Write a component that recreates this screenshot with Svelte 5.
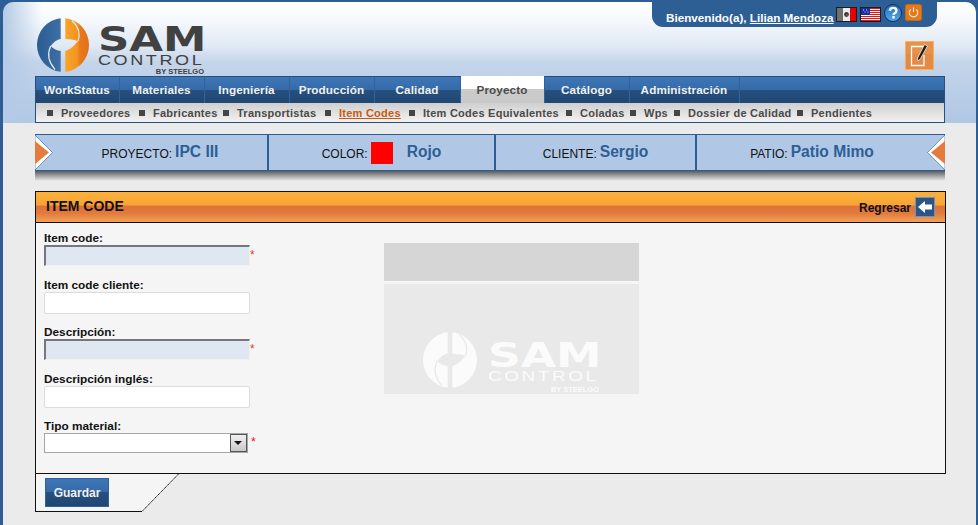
<script>
  const tabs = ['WorkStatus', 'Materiales', 'Ingeniería', 'Producción', 'Calidad', 'Proyecto', 'Catálogo', 'Administración']
  const subs = [
    { name: 'Proveedores', width: 92 },
    { name: 'Fabricantes', width: 84 },
    { name: 'Transportistas', width: 102 },
    { name: 'Item Codes', width: 84 },
    { name: 'Item Codes Equivalentes', width: 157 },
    { name: 'Coladas', width: 64 },
    { name: 'Wps', width: 44 },
    { name: 'Dossier de Calidad', width: 123 },
    { name: 'Pendientes', width: 80 }
  ]
  const info = [
    { label: 'PROYECTO:', value: 'IPC III', width: 234, pad: 18 },
    { label: 'COLOR:', value: 'Rojo', width: 227, pad: 0, swatch: true },
    { label: 'CLIENTE:', value: 'Sergio', width: 201, pad: 0 },
    { label: 'PATIO:', value: 'Patio Mimo', width: 248, pad: -18 }
  ]
  const fields = [
    { label: 'Item code:', required: true, locked: true },
    { label: 'Item code cliente:' },
    { label: 'Descripción:', required: true, locked: true },
    { label: 'Descripción inglés:' }
  ]
</script>

{#snippet mark(a, b, line)}
  <svg class="mark" viewBox="0 0 54 54" aria-hidden="true">
    <defs>
      <linearGradient id="blue-half" x1="0" x2="1" y1="0" y2="0">
        <stop offset="0" stop-color="#2a5c93" />
        <stop offset="1" stop-color="#3f6fa3" />
      </linearGradient>
      <linearGradient id="orange-half" x1="0" x2="1" y1="0" y2="0">
        <stop offset="0" stop-color="#f9a429" />
        <stop offset=".5" stop-color="#f39420" />
        <stop offset=".62" stop-color="#e9791c" />
        <stop offset="1" stop-color="#e2701a" />
      </linearGradient>
    </defs>
    <path d="M24.700 .2A27 27 0 0 0 24.700 53.800V33Q19 32.500 14.700 28Q19 22 24.700 21Z" fill={a} />
    <path d="M29.300 .2A27 27 0 0 1 29.300 53.800V33Q36 31 42 23Q36 21 29.300 21Z" fill={b} />
    <path d="M14.700 28Q9 40 19 51.500" fill="none" stroke={line} stroke-width="1.200" />
    <path d="M36 2.500Q46 12 42 23" fill="none" stroke={line} stroke-width="1.200" />
  </svg>
{/snippet}

<div class="page">
  <header class="top">
    <div class="brand-row">
      <div class="brand">
        {@render mark('url(#blue-half)', 'url(#orange-half)', '#dfe8f3')}
        <div class="word">
          <span class="sam">SAM</span>
          <span class="control">CONTROL</span>
          <span class="by">BY STEELGO</span>
        </div>
      </div>
      <div class="side">
        <div class="user">
          <span class="hello">Bienvenido(a), <a href="#u">Lilian Mendoza</a></span>
          <svg class="flag" viewBox="0 0 21 15" aria-hidden="true">
            <rect width="21" height="15" fill="#1c1c1c" />
            <rect x="1" y="1" width="6" height="13" fill="#6f6f6f" />
            <rect x="7" y="1" width="7" height="13" fill="#ececec" />
            <rect x="14" y="1" width="6" height="13" fill="#e80000" />
            <circle cx="10.500" cy="7.500" r="2.400" fill="#3a3a3a" />
            <circle cx="11" cy="8" r="1" fill="#8a5a3a" />
          </svg>
          <svg class="flag" viewBox="0 0 21 15" aria-hidden="true">
            <rect width="21" height="15" fill="#1c1c1c" />
            <rect x="1" y="1" width="19" height="13" fill="#f7f7f7" />
            <path d="M1 1.500h19M1 3.500h19M1 5.500h19M1 7.500h19M1 9.500h19M1 11.500h19M1 13.500h19" stroke="#e41414" stroke-width="1" />
            <rect x="1" y="1" width="9" height="7" fill="#1b2f9e" />
            <path d="M3 3h1M6 3h1M4.500 5h1M7.500 5h1" stroke="#cfd6f5" stroke-width="1" />
          </svg>
          <svg class="round" viewBox="0 0 18 18" aria-hidden="true">
            <defs>
              <linearGradient id="help-fill" x1="0" x2="0" y1="0" y2="1">
                <stop offset="0" stop-color="#1f6fc4" />
                <stop offset="1" stop-color="#58a6e8" />
              </linearGradient>
            </defs>
            <circle cx="9" cy="9" r="8.500" fill="url(#help-fill)" stroke="#10305f" />
            <path d="M5.800 6.800Q6 3.800 9.200 3.800Q12.500 3.800 12.500 6.500Q12.500 8.300 10.600 9.200Q9.500 9.800 9.500 11" fill="none" stroke="#fff" stroke-width="2.300" />
            <rect x="8.300" y="12" width="2.400" height="2.400" fill="#fff" />
          </svg>
          <svg class="power" viewBox="0 0 17 17" aria-hidden="true">
            <rect x=".5" y=".5" width="16" height="16" rx="2" fill="#e47a1c" stroke="#c9690f" />
            <path d="M5.700 5.500A4.200 4.200 0 1 0 11.300 5.500" fill="none" stroke="#ffe9cf" stroke-width="1.100" />
            <path d="M8.500 3.500V8" stroke="#ffe9cf" stroke-width="1.100" />
          </svg>
        </div>
        <svg class="edit" viewBox="0 0 29 29" aria-hidden="true">
          <rect x=".5" y=".5" width="28" height="28" fill="#e58a45" stroke="#f2b06c" />
          <rect x="1" y="1" width="27" height="12" fill="#e8914a" />
          <path d="M20 5.500H6.500V24.500H19V14" fill="none" stroke="#fff" stroke-width="1.300" />
          <path d="M19.500 3.500L22.500 5L15 18.500L12.800 19.800L12.600 17Z" fill="#1e1e1e" stroke="#fff" stroke-width=".7" />
        </svg>
      </div>
    </div>
    <nav class="nav">
      <ul class="tabs">
        {#each tabs as tab}
          <li
            class:active={tab === 'Proyecto'}
            class:wide={tab === 'Administración'}
            class:calidad={tab === 'Calidad'}>{tab}</li>
        {/each}
        <li class="rest"></li>
      </ul>
      <ul class="subs">
        {#each subs as sub}
          <li class:current={sub.name === 'Item Codes'} style:width="{sub.width}px"><i></i><span>{sub.name}</span></li>
        {/each}
      </ul>
    </nav>
  </header>

  <main class="content">
    <div class="info-wrap">
      <div class="info">
        {#each info as item}
          <div class="cell" style:width="{item.width}px" style:padding-left="{Math.max(item.pad, 0)}px" style:padding-right="{Math.max(-item.pad, 0)}px">
            <span class="cell-label">{item.label}</span>
            {#if item.swatch}<b class="swatch"></b>{/if}
            <span class="cell-value" class:after-swatch={item.swatch}>{item.value}</span>
          </div>
        {/each}
        <svg class="arrow left" viewBox="0 0 18 35" aria-hidden="true">
          <path d="M0 0L17.500 17.500L0 35Z" fill="#fff" stroke="#2d5f95" stroke-width=".6" />
          <path d="M0 6L14 17.500L0 29Z" fill="#e57c3e" />
        </svg>
        <svg class="arrow right" viewBox="0 0 18 35" aria-hidden="true">
          <path d="M18 0L.5 17.500L18 35Z" fill="#fff" stroke="#2d5f95" stroke-width=".6" />
          <path d="M18 6L4 17.500L18 29Z" fill="#e57c3e" />
        </svg>
      </div>
      <div class="info-shadow"></div>
    </div>

    <section class="panel">
      <div class="panel-head">
        <h1>ITEM CODE</h1>
        <a class="back" href="#b">
          <span>Regresar</span>
          <svg viewBox="0 0 20 20" aria-hidden="true">
            <rect x=".5" y=".5" width="19" height="19" fill="#2c5587" stroke="#6f93bd" />
            <path d="M3 10L10 4V7.500H17V12.500H10V16Z" fill="#fff" />
          </svg>
        </a>
      </div>
      <div class="panel-body">
        <form class="form">
          {#each fields as field}
            <div class="field">
              <label for={field.label}>{field.label}</label>
              <div class="control-row">
                <input id={field.label} class:locked={field.locked} readonly />
                {#if field.required}<em>*</em>{/if}
              </div>
            </div>
          {/each}
          <div class="field">
            <label for="tipo">Tipo material:</label>
            <div class="control-row">
              <div class="select" id="tipo">
                <span class="select-btn"><i></i></span>
              </div>
              <em class="sel-star">*</em>
            </div>
          </div>
        </form>
        <div class="preview">
          <div class="preview-top"></div>
          <div class="preview-main">
            {@render mark('#fbfbfb', '#fbfbfb', '#e9e9e9')}
            <div class="word pale">
              <span class="sam">SAM</span>
              <span class="control">CONTROL</span>
              <span class="by">BY STEELGO</span>
            </div>
          </div>
        </div>
      </div>
    </section>

    <div class="actions">
      <div class="actions-box">
        <button type="button">Guardar</button>
      </div>
      <svg class="corner" viewBox="0 0 37 38" aria-hidden="true">
        <path d="M0 0H37L0 38Z" fill="#f5f5f5" />
        <path d="M36.500 0L0 37.500" stroke="#111" stroke-dasharray="1.500 .5" fill="none" />
      </svg>
    </div>
  </main>
</div>

<style>
  :global(body) {
    background: #ebebeb;
  }

  ul {
    list-style: none;
    margin: 0;
    padding: 0;
  }

  .page {
    height: 525px;
    box-sizing: border-box;
    padding: 2px 2px 0 3px;
    background: #2d5f95;
    font-family: "Liberation Sans", Arial, sans-serif;
    overflow: hidden;
  }

  .top {
    height: 121px;
    box-sizing: border-box;
    padding: 0 30px 0 32px;
    border-radius: 10px 10px 0 0;
    background:
      linear-gradient(90deg, #b4cae6 0, rgba(180, 202, 230, 0) 4%),
      linear-gradient(#fff 0, #f6f9fc 18px, #dfe8f4 45px, #c4d5ea 60px, #afc7e4 100%);
  }

  .brand-row {
    display: flex;
    justify-content: space-between;
    height: 74px;
  }

  .brand {
    display: flex;
    align-items: flex-start;
    gap: 8px;
    padding: 16px 0 0 1px;
  }

  .mark {
    width: 54px;
    height: 54px;
    flex: none;
  }

  .word {
    display: flex;
    flex-direction: column;
    align-items: flex-end;
    width: 106px;
    color: #414141;
    padding-top: 8px;
  }

  .sam {
    width: 100%;
    height: 28px;
    font-size: 33px;
    line-height: 28px;
    font-weight: 700;
    font-family: "DejaVu Sans", sans-serif;
    transform: scaleX(1.32);
    transform-origin: left;
    white-space: nowrap;
  }

  .control {
    width: 100%;
    margin-top: -2px;
    font-size: 14px;
    line-height: 16px;
    letter-spacing: 2px;
    transform: scaleX(1.29);
    transform-origin: left;
    white-space: nowrap;
  }

  .by {
    font-size: 7.500px;
    line-height: 8px;
    font-weight: 700;
    white-space: nowrap;
  }

  .side {
    display: flex;
    flex-direction: column;
    align-items: flex-end;
  }

  .user {
    display: flex;
    align-items: center;
    gap: 3px;
    width: 285px;
    height: 25px;
    box-sizing: border-box;
    margin-right: 9px;
    padding-left: 14px;
    border-radius: 0 0 11px 11px;
    background: #2d5f95;
    color: #fff;
    font-size: 11.700px;
    font-weight: 700;
  }

  .hello {
    margin: 6px -1px 0 0;
    white-space: nowrap;
  }

  .user a {
    color: #fff;
  }

  .flag {
    width: 21px;
    height: 15px;
  }

  .round {
    width: 18px;
    height: 18px;
    margin-top: -3px;
  }

  .power {
    width: 17px;
    height: 17px;
    margin-top: -4px;
  }

  .edit {
    width: 29px;
    height: 29px;
    margin: 14px 12px 0 0;
  }

  .nav {
    width: 910px;
    background: #ededed;
  }

  .tabs {
    display: flex;
    height: 27px;
    box-sizing: border-box;
    border-top: 1px solid #264f80;
    background: linear-gradient(#3e76b6 0, #356aa7 50%, #26507e 50%, #214772 100%);
  }

  .tabs li {
    width: 85px;
    box-sizing: border-box;
    padding-right: 1px;
    border-right: 1px solid #2f639c;
    text-align: center;
    color: #f0f0f0;
    font-size: 11.700px;
    font-weight: 700;
    line-height: 26px;
    letter-spacing: .12px;
  }

  .tabs li:first-child {
    border-left: 1px solid #264f80;
  }

  .tabs li.calidad {
    width: 86px;
  }

  .tabs li.wide {
    width: 110px;
  }

  .tabs li.active {
    width: 84px;
    height: 27px;
    margin-top: -1px;
    line-height: 27px;
    color: #4b4b4b;
    background: linear-gradient(#fff 0, #fff 50%, #cbcbcb 50%, #c9c9c9 100%);
  }

  .tabs li.rest {
    flex: 1;
    border-right: 1px solid #264f80;
  }

  .subs {
    display: flex;
    align-items: center;
    height: 20px;
    box-sizing: border-box;
    padding-left: 11px;
    border: 1px solid #264f80;
    border-top: 0;
    background: linear-gradient(#cfcfcf, #f2f2f2);
    font-size: 11px;
    font-weight: 700;
    color: #4a4a4a;
    letter-spacing: .25px;
    white-space: nowrap;
  }

  .subs li {
    display: flex;
    align-items: center;
    gap: 8px;
    flex: none;
  }

  .subs i {
    width: 6px;
    height: 6px;
    background: #454545;
  }

  .subs .current span {
    color: #c85a10;
    text-decoration: underline;
  }

  .content {
    height: 402px;
    padding: 11px 30px 0 32px;
    background: #ebebeb;
  }

  .info-wrap {
    width: 910px;
  }

  .info {
    position: relative;
    display: flex;
    height: 37px;
    box-sizing: border-box;
    border-top: 1px solid #2d5f95;
    border-bottom: 1px solid #2d5f95;
    background: #b0c8e6;
    overflow: hidden;
  }

  .cell {
    display: flex;
    align-items: center;
    justify-content: center;
    gap: 3px;
    box-sizing: border-box;
    padding-top: 2px;
    border-right: 2px solid #2d5f95;
    color: #111;
    font-size: 12px;
  }

  .cell:nth-child(4) {
    border-right: 0;
  }

  .cell-value {
    margin-top: -3px;
    color: #2d5f95;
    font-size: 15.600px;
    font-weight: 700;
  }

  .after-swatch {
    margin-left: 11px;
  }

  .swatch {
    width: 22px;
    height: 22px;
    margin-top: -2px;
    background: #fe0000;
  }

  .arrow {
    position: absolute;
    top: 0;
    width: 18px;
    height: 35px;
  }

  .arrow.left {
    left: 0;
  }

  .arrow.right {
    right: 0;
  }

  .info-shadow {
    height: 10px;
    background: linear-gradient(#5c5c5c, #ebebeb);
  }

  .panel {
    display: flex;
    flex-direction: column;
    height: 283px;
    box-sizing: border-box;
    margin-top: 10px;
    border: 1px solid #111;
    background: #f5f5f5;
  }

  .panel-head {
    display: flex;
    justify-content: space-between;
    align-items: center;
    flex: none;
    height: 31px;
    box-sizing: border-box;
    padding: 0 10px;
    border-bottom: 1px solid #111;
    background: linear-gradient(#fbb03a 0, #f7a535 42%, #df733a 48%, #e2793c 70%, #f2a155 100%);
  }

  h1 {
    margin: -2px 0 0;
    font-size: 14px;
    color: #111;
  }

  .back {
    display: flex;
    align-items: center;
    gap: 4px;
    font-size: 12px;
    font-weight: 700;
    color: #111;
    text-decoration: none;
  }

  .back span {
    margin-top: 2px;
  }

  .back svg {
    width: 20px;
    height: 20px;
  }

  .panel-body {
    display: flex;
    padding: 8px 0 0 8px;
  }

  .form {
    flex: none;
    width: 340px;
  }

  .field {
    height: 47px;
  }

  label {
    display: block;
    height: 14px;
    font-size: 11.800px;
    line-height: 14px;
    font-weight: 700;
    color: #111;
  }

  .control-row {
    display: flex;
    align-items: center;
  }

  input {
    display: block;
    width: 206px;
    height: 22px;
    box-sizing: border-box;
    padding: 0;
    border: 1px solid #dcdcdc;
    border-radius: 2px;
    background: #fff;
  }

  input.locked {
    height: 21px;
    border-width: 2px 1px 1px 2px;
    border-color: #777 #f0f0f0 #f0f0f0 #777;
    border-radius: 0;
    background: #dfe7f3;
  }

  em {
    margin: -2px 0 0;
    font-style: normal;
    font-size: 12px;
    line-height: 12px;
    color: #e8401a;
  }

  .select {
    position: relative;
    width: 204px;
    height: 20px;
    box-sizing: border-box;
    border: 1px solid #a5a5ad;
    background: #fff;
  }

  .select-btn {
    position: absolute;
    top: 0;
    right: 0;
    display: block;
    width: 17px;
    height: 18px;
    box-sizing: border-box;
    border: 1px solid #555;
    background: linear-gradient(#f0f0f0, #c8c8c8);
  }

  .select-btn i {
    position: absolute;
    left: 3px;
    top: 6px;
    border: 4px solid transparent;
    border-top: 4px solid #111;
    border-bottom: 0;
  }

  em.sel-star {
    margin-left: 3px;
    color: #f01010;
  }

  .preview {
    width: 255px;
    margin-top: 12px;
  }

  .preview-top {
    height: 38px;
    background: #d6d6d6;
  }

  .preview-main {
    display: flex;
    align-items: flex-start;
    gap: 10px;
    height: 110px;
    box-sizing: border-box;
    margin-top: 3px;
    padding: 48px 0 0 38px;
    background: #e9e9e9;
    overflow: hidden;
  }

  .preview-main .mark {
    width: 56px;
    height: 56px;
  }

  .word.pale {
    width: 111px;
    padding-top: 9px;
    color: #fbfbfb;
  }

  .pale .sam {
    font-size: 34.500px;
  }

  .pale .control {
    margin-top: -1px;
    font-size: 14.700px;
  }

  .pale .by {
    margin-top: 2px;
  }

  .actions {
    display: flex;
    width: 144px;
    height: 38px;
  }

  .actions-box {
    width: 107px;
    box-sizing: border-box;
    padding: 4px 0 0 9px;
    border-left: 1px solid #111;
    border-bottom: 1px solid #111;
    background: #f5f5f5;
  }

  button {
    display: block;
    width: 64px;
    height: 29px;
    box-sizing: border-box;
    padding: 0;
    border: 1px solid #2f639c;
    background: linear-gradient(#3e76b6 0, #356aa7 50%, #26507e 50%, #214772 100%);
    color: #f0f0f0;
    font: 700 12px "Liberation Sans", Arial, sans-serif;
  }

  .corner {
    flex: none;
    width: 37px;
    height: 38px;
  }
</style>
